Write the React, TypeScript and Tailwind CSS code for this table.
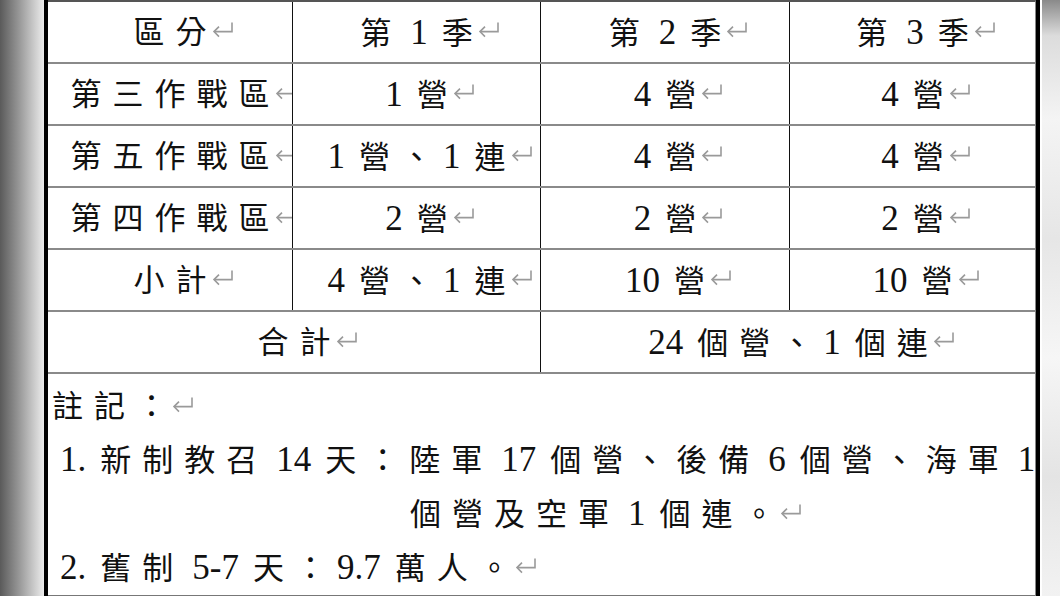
import React from "react";

const FONT = { fontFamily: '"Liberation Serif", "Noto Sans CJK TC", serif' };

const isCJK = (c: string) => c.charCodeAt(0) >= 0x2e80;

// split text into CJK runs (spaced out), latin runs and spaces
function Spaced({ text }: { text: string }) {
  const runs = text.match(/[\u2E80-\uFFFF]+| |[^\u2E80-\uFFFF ]+/g) || [];
  return (
    <>
      {runs.map((r, i) => {
        if (r === " ") {
          const prev = runs[i - 1] || "";
          return prev && isCJK(prev) ? (
            <span key={i} className="inline-block w-[8px]" />
          ) : (
            <span key={i} className="inline-block w-[14px]" />
          );
        }
        return isCJK(r) ? (
          <span key={i} className="tracking-[11px]">
            {r}
          </span>
        ) : (
          <span key={i} className="text-[35px] tracking-normal" style={{ fontFamily: '"Liberation Serif", serif' }}>
            {r}
          </span>
        );
      })}
    </>
  );
}

const Ret = () => (
  <svg width="26" height="20" viewBox="0 0 26 20" className="absolute left-full top-1/2 -ml-[8px] -translate-y-[62%]">
    <path d="M22 3 V12 H4" fill="none" stroke="#9a9a9a" strokeWidth="1.6" />
    <path d="M9 7 L4 12 L9 17" fill="none" stroke="#9a9a9a" strokeWidth="1.6" />
  </svg>
);

const Cell = ({ text, last }: { text: string; last?: boolean }) => (
  <div
    className={
      "flex items-center justify-center overflow-hidden " +
      (last ? "" : "border-r-[1.5px] border-[#111]")
    }
  >
    <span className="relative -mr-[11px] inline-block whitespace-nowrap leading-none">
      <Spaced text={text} />
      <Ret />
    </span>
  </div>
);

const rows = [
  ["區分", "第 1 季", "第 2 季", "第 3 季"],
  ["第三作戰區", "1 營", "4 營", "4 營"],
  ["第五作戰區", "1 營、1 連", "4 營", "4 營"],
  ["第四作戰區", "2 營", "2 營", "2 營"],
  ["小計", "4 營、1 連", "10 營", "10 營"],
];

export default function App() {
  return (
    <div className="flex h-[596px] w-[1060px] overflow-hidden bg-white text-[31px] text-[#111]" style={FONT}>
      <div className="w-[44px] shrink-0 bg-[linear-gradient(to_right,#5a5a5a,#9a9a9a_45%,#ececec)]" />
      <div className="flex w-[996px] shrink-0 flex-col border-x-4 border-black">
        <div className="flex flex-col border-t-2 border-r border-[#555] border-r-[#888]">
          {rows.map((r, i) => (
            <div
              key={i}
              className="grid h-[62px] grid-cols-[245px_248px_249px_1fr] border-b-[2.5px] border-[#8a8a8a]"
            >
              {r.map((t, j) => (
                <Cell key={j} text={t} last={j === 3} />
              ))}
            </div>
          ))}
          <div className="grid h-[62px] grid-cols-[493px_1fr] border-b-[2.5px] border-[#8a8a8a]">
            <Cell text="合計" />
            <Cell text="24 個營、1 個連" last />
          </div>
        </div>
        <div className="flex flex-1 flex-col border-r border-b-[3px] border-[#777] border-r-[#888] pt-[6px] leading-[53px]">
          <div className="pl-[4px]">
            <span className="relative inline-block">
              <Spaced text="註記：" />
              <Ret />
            </span>
          </div>
          <div className="whitespace-nowrap pl-[12px]">
            <Spaced text="1. 新制教召 14 天：陸軍 17 個營、後備 6 個營、海軍 1" />
          </div>
          <div className="pl-[362px]">
            <span className="relative inline-block">
              <Spaced text="個營及空軍 1 個連。" />
              <Ret />
            </span>
          </div>
          <div className="pl-[12px]">
            <span className="relative inline-block">
              <Spaced text="2. 舊制 5-7 天：9.7 萬人。" />
              <Ret />
            </span>
          </div>
        </div>
      </div>
      <div className="flex-1 border-l-2 border-white bg-[linear-gradient(to_bottom,#8a8a8a,#dcdcdc_6%,#f4f4f4_20%,#e6e6e6_40%,#f6f6f6_60%,#e4e4e4_80%,#f2f2f2)]" />
    </div>
  );
}
